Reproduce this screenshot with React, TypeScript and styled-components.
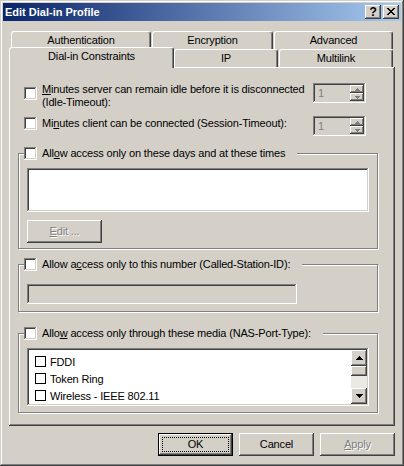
import React from 'react';
import styled, { createGlobalStyle } from 'styled-components';

const face = '#d4d0c8';
const raised = `inset -1px -1px #404040, inset 1px 1px #fff, inset -2px -2px #808080, inset 2px 2px ${face}`;
const sunken = `inset -1px -1px #fff, inset 1px 1px #808080, inset -2px -2px ${face}, inset 2px 2px #404040`;
const windowEdge = `inset -1px -1px #404040, inset 1px 1px ${face}, inset -2px -2px #808080, inset 2px 2px #fff`;
const panelEdge = `inset -1px -1px #404040, inset 1px 1px #fff, inset -2px -2px #808080`;

const GlobalStyle = createGlobalStyle`
  html, body {
    margin: 0;
    padding: 0;
    background: ${face};
  }
  body {
    font-family: 'Liberation Sans', Arial, sans-serif;
    font-size: 11px;
    letter-spacing: -0.16px;
    color: #000;
  }
  * { box-sizing: border-box; }
`;

const Window = styled.div`
  width: 404px;
  height: 466px;
  padding: 3px;
  background: ${face};
  box-shadow: ${windowEdge};
  display: flex;
  flex-direction: column;
`;

const TitleBar = styled.div`
  height: 18px;
  display: flex;
  align-items: center;
  padding: 0 2px 0 2px;
  background: linear-gradient(to right, #0a246a, #a6caf0);
`;

const Title = styled.span`
  flex: 1;
  color: #fff;
  font-weight: bold;
  font-size: 11px;
  letter-spacing: 0;
  line-height: 18px;
`;

const CaptionButton = styled.div`
  width: 16px;
  height: 14px;
  background: ${face};
  box-shadow: ${raised};
  display: flex;
  align-items: center;
  justify-content: center;
  font-weight: bold;
  font-size: 12px;
  line-height: 14px;
  padding-bottom: 1px;
  & + & {
    margin-left: 2px;
  }
`;

const Body = styled.div`
  padding: 10px 6px 0;
  display: flex;
  flex-direction: column;
`;

const TabRow = styled.div<{ $pl: number }>`
  display: flex;
  align-items: flex-end;
  height: 18px;
  padding-left: ${p => p.$pl}px;
`;

const Tab = styled.div<{ $w: number; $gap?: number; $active?: boolean }>`
  width: ${p => p.$w}px;
  height: ${p => (p.$active ? 21 : 18)}px;
  margin-left: ${p => p.$gap || 0}px;
  margin-bottom: ${p => (p.$active ? -1 : 0)}px;
  position: ${p => (p.$active ? 'relative' : 'static')};
  z-index: ${p => (p.$active ? 1 : 0)};
  background: ${face};
  border: 1px solid #fff;
  border-bottom: none;
  border-right-color: #404040;
  border-radius: 3px 3px 0 0;
  box-shadow: inset -1px 0 #808080;
  display: flex;
  align-items: center;
  justify-content: center;
  padding-bottom: ${p => (p.$active ? 3 : 0)}px;
  line-height: 13px;
`;

const Panel = styled.div`
  width: 386px;
  height: 359px;
  box-shadow: ${panelEdge};
  padding: 16px 17px 0 9px;
  display: flex;
  flex-direction: column;
`;

const OptionRow = styled.div<{ $mt?: number }>`
  display: flex;
  align-items: flex-start;
  margin-top: ${p => p.$mt || 0}px;
  padding: 0 12px 0 6px;
`;

const CheckLabel = styled.div<{ $mt?: number }>`
  display: flex;
  align-items: flex-start;
  gap: 5px;
  margin-top: ${p => p.$mt || 0}px;
`;

const CheckBox = styled.span<{ $mt?: number }>`
  display: block;
  flex: none;
  width: 13px;
  height: 13px;
  margin-top: ${p => p.$mt || 0}px;
  background: #fff;
  box-shadow: ${sunken};
`;

const LabelText = styled.span`
  line-height: 13px;
  white-space: nowrap;
`;

const Spin = styled.div`
  margin-left: auto;
  width: 53px;
  height: 20px;
  padding: 2px;
  background: ${face};
  box-shadow: ${sunken};
  display: flex;
`;

const SpinValue = styled.span`
  flex: 1;
  color: #808080;
  padding-left: 3px;
  line-height: 16px;
`;

const SpinButtons = styled.div`
  width: 14px;
  display: flex;
  flex-direction: column;
`;

const SpinButton = styled.div`
  height: 8px;
  background: ${face};
  box-shadow: ${raised};
  display: flex;
  align-items: center;
  justify-content: center;
`;

const Group = styled.div<{ $mt: number; $pb: number }>`
  margin-top: ${p => p.$mt}px;
  width: 360px;
  border: 1px solid #808080;
  box-shadow: inset 1px 1px #fff, 1px 1px #fff;
  padding: 0 8px ${p => p.$pb}px;
  display: flex;
  flex-direction: column;
  align-items: flex-start;
`;

const Legend = styled.div`
  display: flex;
  align-items: center;
  gap: 5px;
  height: 13px;
  margin: -7px 0 0 -3px;
  padding-right: 12px;
  background: ${face};
`;

const WhiteBox = styled.div`
  margin-top: 8px;
  width: 342px;
  height: 44px;
  background: #fff;
  box-shadow: ${sunken};
`;

const PushButton = styled.div<{ $default?: boolean; $disabled?: boolean; $mt?: number }>`
  width: 75px;
  height: 23px;
  margin-top: ${p => p.$mt || 0}px;
  background: ${face};
  box-shadow: ${p =>
    p.$default
      ? 'inset 0 0 0 1px #000, inset -2px -2px #404040, inset 2px 2px #fff, inset -3px -3px #808080'
      : raised};
  display: flex;
  padding: 4px;
  color: ${p => (p.$disabled ? '#808080' : '#000')};
  text-shadow: ${p => (p.$disabled ? '1px 1px #fff' : 'none')};
`;

const ButtonFace = styled.span<{ $focus?: boolean }>`
  flex: 1;
  display: flex;
  align-items: center;
  justify-content: center;
  border: 1px dotted ${p => (p.$focus ? '#000' : 'transparent')};
  line-height: 13px;
`;

const Field = styled.div`
  margin-top: 13px;
  width: 270px;
  height: 20px;
  background: ${face};
  box-shadow: ${sunken};
`;

const ListBox = styled.div`
  margin-top: 8px;
  width: 342px;
  height: 58px;
  padding: 2px;
  background: #fff;
  box-shadow: ${sunken};
  display: flex;
`;

const ListItems = styled.div`
  flex: 1;
  padding: 3px 0 0 6px;
  display: flex;
  flex-direction: column;
`;

const ListItem = styled.div`
  height: 17px;
  display: flex;
  align-items: center;
  gap: 4px;
`;

const ItemCheck = styled.span`
  width: 11px;
  height: 11px;
  border: 1px solid #000;
  background: #fff;
`;

const ScrollBar = styled.div`
  width: 16px;
  display: flex;
  flex-direction: column;
`;

const ScrollArrow = styled.div`
  height: 16px;
  background: ${face};
  box-shadow: ${raised};
  display: flex;
  align-items: center;
  justify-content: center;
`;

const ScrollThumb = styled.div`
  height: 10px;
  background: ${face};
  box-shadow: ${raised};
`;

const ScrollTrack = styled.div`
  flex: 1;
  background: #ebe9e5;
`;

const Footer = styled.div`
  margin-top: 7px;
  display: flex;
  justify-content: flex-end;
  gap: 6px;
`;

const CloseGlyph = () => (
  <svg width="8" height="7" viewBox="0 0 8 7" shapeRendering="crispEdges">
    <path
      d="M0 0h2v1h-2zM6 0h2v1h-2zM1 1h2v1h-2zM5 1h2v1h-2zM2 2h4v1h-4zM3 3h2v1h-2zM2 4h4v1h-4zM1 5h2v1h-2zM5 5h2v1h-2zM0 6h2v1h-2zM6 6h2v1h-2z"
      fill="#000"
    />
  </svg>
);

const Arrow = ({ up, size = 7, color = '#000' }: { up?: boolean; size?: number; color?: string }) => {
  const h = Math.ceil(size / 2);
  return (
    <svg width={size} height={h} viewBox={`0 0 ${size} ${h}`} shapeRendering="crispEdges">
      <polygon
        points={up ? `${size / 2},0 ${size},${h} 0,${h}` : `0,0 ${size},0 ${size / 2},${h}`}
        fill={color}
      />
    </svg>
  );
};

const SpinBox = () => (
  <Spin>
    <SpinValue>1</SpinValue>
    <SpinButtons>
      <SpinButton>
        <Arrow up size={5} color='#808080' />
      </SpinButton>
      <SpinButton>
        <Arrow size={5} color='#808080' />
      </SpinButton>
    </SpinButtons>
  </Spin>
);

const mediaTypes = ['FDDI', 'Token Ring', 'Wireless - IEEE 802.11'];

const App = () => (
  <>
    <GlobalStyle />
    <Window>
      <TitleBar>
        <Title>Edit Dial-in Profile</Title>
        <CaptionButton>?</CaptionButton>
        <CaptionButton>
          <CloseGlyph />
        </CaptionButton>
      </TitleBar>
      <Body>
        <TabRow $pl={2}>
          <Tab $w={140}>Authentication</Tab>
          <Tab $w={121} $gap={1}>Encryption</Tab>
          <Tab $w={119} $gap={1}>Advanced</Tab>
        </TabRow>
        <TabRow $pl={0}>
          <Tab $w={165} $active>Dial-in Constraints</Tab>
          <Tab $w={104}>IP</Tab>
          <Tab $w={114} $gap={1}>Multilink</Tab>
        </TabRow>
        <Panel>
          <OptionRow>
            <CheckLabel>
              <CheckBox $mt={4} />
              <LabelText>
                <u>M</u>inutes server can remain idle before it is disconnected
                <br />
                (Idle-Timeout):
              </LabelText>
            </CheckLabel>
            <SpinBox />
          </OptionRow>
          <OptionRow $mt={7}>
            <CheckLabel $mt={1}>
              <CheckBox />
              <LabelText>
                Mi<u>n</u>utes client can be connected (Session-Timeout):
              </LabelText>
            </CheckLabel>
            <SpinBox />
          </OptionRow>

          <Group $mt={17} $pb={5}>
            <Legend>
              <CheckBox />
              <LabelText>
                All<u>o</u>w access only on these days and at these times
              </LabelText>
            </Legend>
            <WhiteBox />
            <PushButton $disabled $mt={8}>
              <ButtonFace>
                <span>
                  <u>E</u>dit ...
                </span>
              </ButtonFace>
            </PushButton>
          </Group>

          <Group $mt={15} $pb={7}>
            <Legend>
              <CheckBox />
              <LabelText>
                Allow a<u>c</u>cess only to this number (Called-Station-ID):
              </LabelText>
            </Legend>
            <Field />
          </Group>

          <Group $mt={21} $pb={6}>
            <Legend>
              <CheckBox />
              <LabelText>
                Allo<u>w</u> access only through these media (NAS-Port-Type):
              </LabelText>
            </Legend>
            <ListBox>
              <ListItems>
                {mediaTypes.map(name => (
                  <ListItem key={name}>
                    <ItemCheck />
                    <span>{name}</span>
                  </ListItem>
                ))}
              </ListItems>
              <ScrollBar>
                <ScrollArrow>
                  <Arrow up />
                </ScrollArrow>
                <ScrollThumb />
                <ScrollTrack />
                <ScrollArrow>
                  <Arrow />
                </ScrollArrow>
              </ScrollBar>
            </ListBox>
          </Group>
        </Panel>
        <Footer>
          <PushButton $default>
            <ButtonFace $focus>OK</ButtonFace>
          </PushButton>
          <PushButton>
            <ButtonFace>Cancel</ButtonFace>
          </PushButton>
          <PushButton $disabled>
            <ButtonFace>
              <span>
                <u>A</u>pply
              </span>
            </ButtonFace>
          </PushButton>
        </Footer>
      </Body>
    </Window>
  </>
);

export default App;
